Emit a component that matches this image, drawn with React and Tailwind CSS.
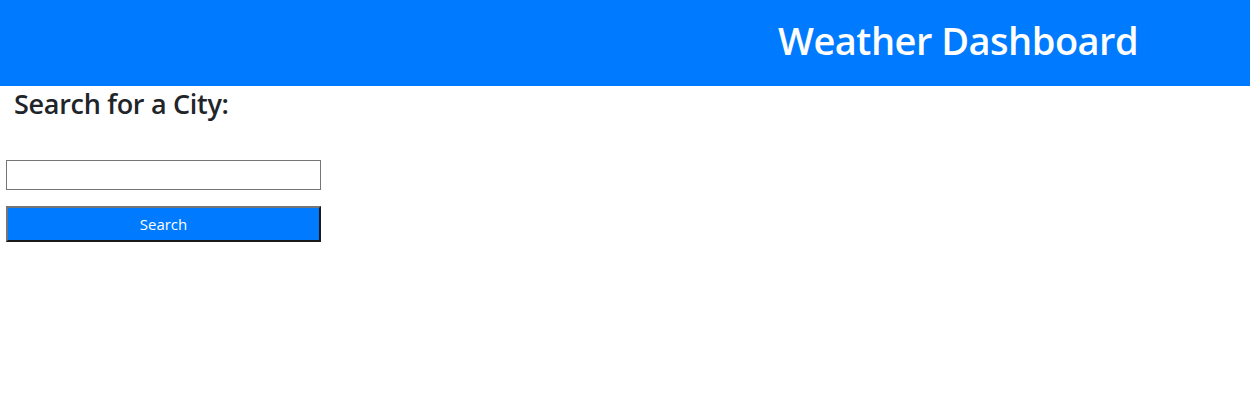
import React, { useState } from "react";

const font = { fontFamily: '"Open Sans", "Noto Sans", sans-serif' };

const App = () => {
  const [city, setCity] = useState("");

  return (
    <div className="min-h-[405px] bg-white text-[#212529]" style={font}>
      {/* Header */}
      <header className="h-[86px] bg-[#007bff] flex items-center pb-[6px]">
        <h1 className="ml-[778px] text-[38px] font-semibold text-white tracking-[-0.5px] leading-none">
          Weather Dashboard
        </h1>
      </header>

      {/* Search */}
      <div className="px-[6px]">
        <h2 className="pl-[8px] pt-[3px] text-[27px] font-semibold leading-[30px] tracking-[-0.3px]">
          Search for a City:
        </h2>
        <input
          value={city}
          onChange={(e) => setCity(e.target.value)}
          className="mt-[41px] block w-[315px] h-[30px] border border-[#767676] bg-white px-1 outline-none"
        />
        <button className="mt-[16px] block w-[315px] h-[36px] bg-[#007bff] text-white text-[15px] border-2 border-t-[#767676] border-l-[#767676] border-b-[#1a1a1a] border-r-[#1a1a1a]">
          Search
        </button>
      </div>
    </div>
  );
};

export default App;
